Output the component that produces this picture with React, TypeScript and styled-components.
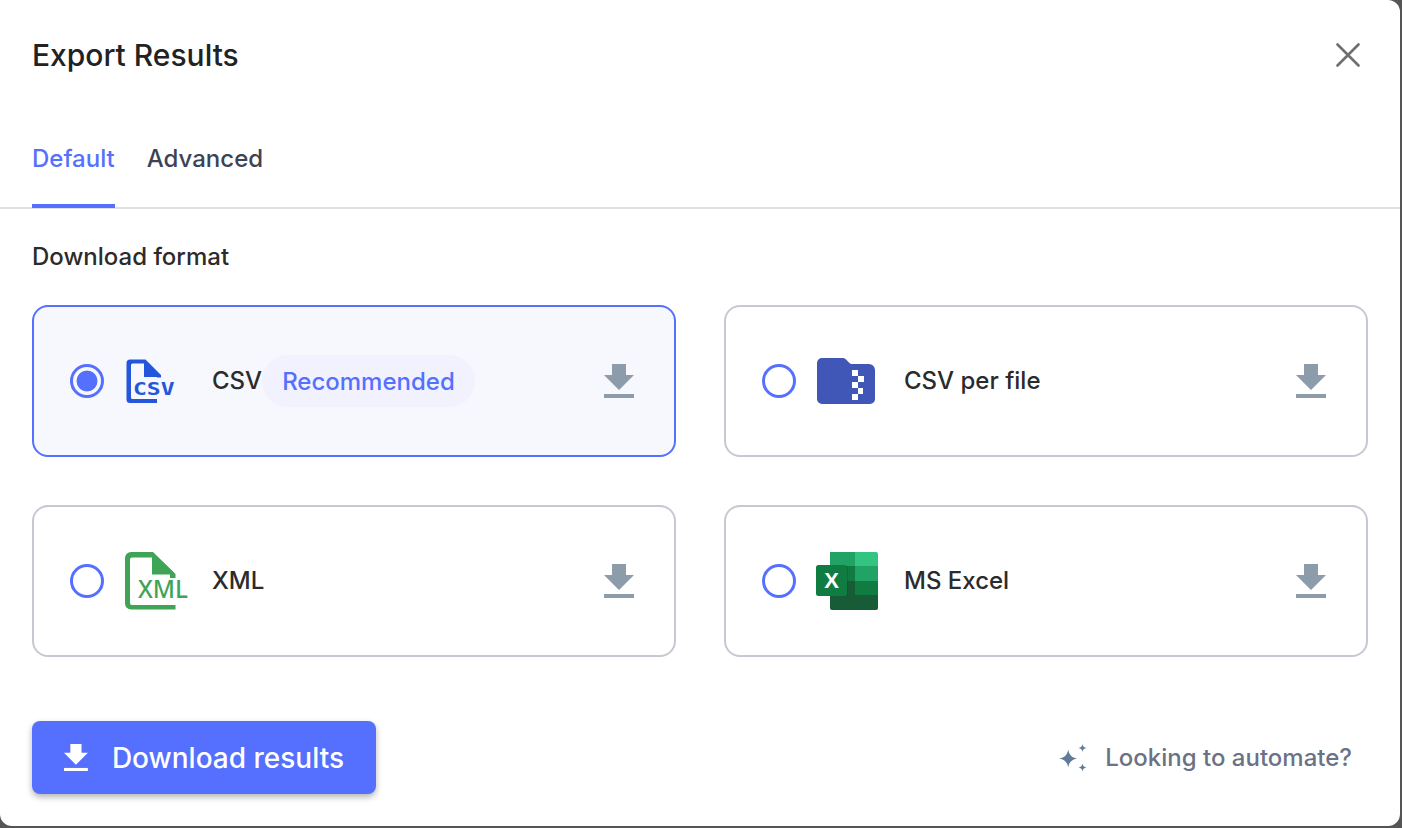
import styled, { createGlobalStyle } from 'styled-components'

const GlobalStyle = createGlobalStyle`
  html, body {
    margin: 0;
    padding: 0;
    background: #555555;
  }
  * {
    box-sizing: border-box;
  }
`

function DownloadIcon({ size = 30 }: { size?: number }) {
    return (
        <svg width={size} height={(size * 34) / 30} viewBox="0 0 30 34" fill="currentColor">
            <path d="M8 0h14v11h8L15 26 0 11h8z" />
            <rect x="0" y="30" width="30" height="4" />
        </svg>
    )
}

function CsvIcon() {
    return (
        <svg width="50" height="48" viewBox="0 0 50 48">
            <path
                d="M5 2.5h15.5L36 18v2.500h-4V20H19V6.500H7.500a1.500 1.500 0 0 0-1.500 1.500v32.500a1.500 1.500 0 0 0 1.500 1.500H32v4H5a3.500 3.500 0 0 1-3.500-3.500V6A3.500 3.500 0 0 1 5 2.500z"
                fill="#2456dc"
            />
            <path d="M22.500 5l12 12.500h-12z" fill="#2456dc" />
            <text x="8" y="38" fontFamily="'DejaVu Sans Mono', monospace" fontWeight="700" fontSize="18.500" fill="#2456dc" textLength="41.500" lengthAdjust="spacingAndGlyphs">CSV</text>
        </svg>
    )
}

function FolderIcon() {
    return (
        <svg width="58" height="48" viewBox="0 0 58 48">
            <path
                d="M5 1h20.500c1.500 0 2.600.5 3.500 1.500l3.500 3.500c.8.800 1.600 1 2.500 1H52a6 6 0 0 1 6 6v29a5 5 0 0 1-5 5H5a5 5 0 0 1-5-5V6a5 5 0 0 1 5-5z"
                fill="#4057b8"
            />
            <g fill="#ffffff">
                <rect x="35" y="13" width="6" height="6" />
                <rect x="41" y="19" width="6" height="6" />
                <rect x="35" y="25" width="6" height="6" />
                <rect x="41" y="31" width="5" height="6" />
                <rect x="35" y="37" width="6" height="6" />
            </g>
        </svg>
    )
}

function XmlIcon() {
    return (
        <svg width="66" height="60" viewBox="0 0 66 60">
            <path
                d="M7 1h22l22.500 22v4H46v-3.500H28V6.500H8a2 2 0 0 0-2 2V52a2 2 0 0 0 2 2h43.500v4.500H7a6 6 0 0 1-6-6V7a6 6 0 0 1 6-6z"
                fill="#3fa456"
            />
            <path d="M32 5l17 16H32z" fill="#3fa456" />
            <text x="14" y="47" fontFamily="'Noto Sans', sans-serif" fontWeight="500" fontSize="25" fill="#3fa456" textLength="50" lengthAdjust="spacingAndGlyphs">XML</text>
        </svg>
    )
}

function ExcelIcon() {
    return (
        <svg width="62" height="58" viewBox="0 0 62 58">
            <path d="M17 2a2 2 0 0 1 2-2h20v14H14z" fill="#21a366" />
            <path d="M14 0h25v14H14z" fill="#21a366" />
            <path d="M39 0h21a2 2 0 0 1 2 2v12H39z" fill="#33c481" />
            <rect x="14" y="14" width="25" height="15" fill="#107c41" />
            <rect x="39" y="14" width="23" height="15" fill="#21a366" />
            <rect x="14" y="29" width="25" height="14" fill="#185c37" />
            <rect x="39" y="29" width="23" height="14" fill="#107c41" />
            <path d="M14 43h48v13a2 2 0 0 1-2 2H16a2 2 0 0 1-2-2z" fill="#185c37" />
            <rect x="14" y="14" width="18" height="30" fill="#0b3a22" opacity="0.25" />
            <rect x="0" y="13" width="31" height="31" rx="2.500" fill="#107c41" />
            <text x="15.500" y="36" textAnchor="middle" fontFamily="'Liberation Sans', sans-serif" fontWeight="700" fontSize="22" fill="#ffffff">X</text>
        </svg>
    )
}

function SparkleIcon() {
    return (
        <svg width="30" height="30" viewBox="0 0 30 30" fill="#5f7d98">
            <path d="M12 6.500c1 4.800 3.200 7 8 8-4.800 1-7 3.200-8 8-1-4.800-3.200-7-8-8 4.800-1 7-3.200 8-8z" transform="translate(-4 -.5) scale(1.100)" />
            <path d="M23.500 1c.5 2.600 1.400 3.500 4 4-2.600.5-3.500 1.400-4 4-.5-2.600-1.400-3.500-4-4 2.600-.5 3.500-1.400 4-4z" />
            <path d="M23.500 20.500c.5 2.600 1.400 3.500 4 4-2.600.5-3.500 1.400-4 4-.5-2.600-1.400-3.500-4-4 2.600-.5 3.500-1.400 4-4z" />
        </svg>
    )
}

const formats = [
    { name: 'CSV', icon: <CsvIcon />, selected: true, recommended: true, iconWidth: 52 },
    { name: 'CSV per file', icon: <FolderIcon />, selected: false, recommended: false, iconWidth: 60 },
    { name: 'XML', icon: <XmlIcon />, selected: false, recommended: false, iconWidth: 66 },
    { name: 'MS Excel', icon: <ExcelIcon />, selected: false, recommended: false, iconWidth: 62 },
]

export default function App() {
    return (
        <Modal>
            <GlobalStyle />
            <Header>
                <Title>Export Results</Title>
                <CloseButton aria-label="Close">
                    <svg width="24" height="24" viewBox="0 0 24 24" stroke="currentColor" strokeWidth="2.600" strokeLinecap="round">
                        <path d="M1.500 1.500l21 21M22.500 1.500l-21 21" />
                    </svg>
                </CloseButton>
            </Header>
            <Tabs>
                <Tab $active>Default</Tab>
                <Tab>Advanced</Tab>
            </Tabs>
            <Body>
                <SectionLabel>Download format</SectionLabel>
                <FormatGrid>
                    {formats.map((format) => (
                        <FormatCard key={format.name} $selected={format.selected}>
                            <Radio $selected={format.selected} />
                            <IconSlot $width={format.iconWidth}>{format.icon}</IconSlot>
                            <FormatName>{format.name}</FormatName>
                            {format.recommended && <Badge>Recommended</Badge>}
                            <CardDownload>
                                <DownloadIcon />
                            </CardDownload>
                        </FormatCard>
                    ))}
                </FormatGrid>
                <Footer>
                    <DownloadButton>
                        <DownloadIcon size={24} />
                        Download results
                    </DownloadButton>
                    <AutomateLink>
                        <SparkleIcon />
                        Looking to automate?
                    </AutomateLink>
                </Footer>
            </Body>
        </Modal>
    )
}

const Modal = styled.div`
  width: 1400px;
  height: 826px;
  background: #ffffff;
  border-radius: 0 0 12px 12px;
  border-top-right-radius: 12px;
  font-family: Inter, 'Liberation Sans', sans-serif;
  color: #2b2b2b;
  overflow: hidden;
`

const Header = styled.header`
  display: flex;
  justify-content: space-between;
  align-items: center;
  height: 110px;
  padding: 0 40px 0 32px;
`

const Title = styled.h2`
  margin: 0;
  font-size: 30px;
  line-height: 40px;
  font-weight: 500;
  color: #222222;
`

const CloseButton = styled.button`
  display: flex;
  padding: 0;
  border: 0;
  background: none;
  color: #6f6f6f;
`

const Tabs = styled.nav`
  display: flex;
  gap: 32px;
  height: 99px;
  padding: 0 32px;
  border-bottom: 2px solid #dfdfdf;
`

const Tab = styled.div<{ $active?: boolean }>`
  height: 98px;
  padding-top: 31px;
  font-size: 24px;
  line-height: 36px;
  font-weight: 500;
  color: ${(p) => (p.$active ? '#5570ff' : '#3d4356')};
  border-bottom: 4px solid ${(p) => (p.$active ? '#5570ff' : 'transparent')};
`

const Body = styled.div`
  padding: 0 32px;
`

const SectionLabel = styled.div`
  margin-top: 30px;
  font-size: 24px;
  line-height: 36px;
  font-weight: 500;
  color: #2b2b2b;
`

const FormatGrid = styled.div`
  display: grid;
  grid-template-columns: 644px 644px;
  grid-auto-rows: 152px;
  gap: 48px;
  margin-top: 30px;
`

const FormatCard = styled.div<{ $selected: boolean }>`
  display: flex;
  align-items: center;
  padding: 0 36px;
  border: 2px solid ${(p) => (p.$selected ? '#5570ff' : '#c6c9d2')};
  border-radius: 16px;
  background: ${(p) => (p.$selected ? '#f7f8fe' : '#ffffff')};
`

const Radio = styled.span<{ $selected: boolean }>`
  flex: none;
  width: 34px;
  height: 34px;
  border: 3px solid #5570ff;
  border-radius: 50%;
  background: ${(p) => (p.$selected ? 'radial-gradient(circle, #5570ff 0 10px, transparent 10.8px)' : 'transparent')};
`

const IconSlot = styled.span<{ $width: number }>`
  display: flex;
  justify-content: center;
  flex: none;
  width: ${(p) => p.$width}px;
  margin-left: 20px;
  margin-right: ${(p) => 72 - p.$width + 16}px;
`

const FormatName = styled.span`
  font-size: 24px;
  line-height: 36px;
  font-weight: 500;
  color: #2b2b2b;
`

const Badge = styled.span`
  display: flex;
  align-items: center;
  height: 52px;
  padding: 0 20px;
  border-radius: 26px;
  background: #f1f2fd;
  color: #5570ff;
  font-size: 24px;
  font-weight: 500;
`

const CardDownload = styled.span`
  display: flex;
  margin-left: auto;
  margin-right: 4px;
  color: #8d9cab;
`

const Footer = styled.div`
  display: flex;
  justify-content: space-between;
  align-items: center;
  margin-top: 64px;
`

const DownloadButton = styled.button`
  display: flex;
  align-items: center;
  gap: 24px;
  width: 344px;
  height: 73px;
  padding: 0 32px;
  border: 0;
  border-radius: 8px;
  background: #5570ff;
  color: #ffffff;
  font-family: inherit;
  font-size: 28px;
  font-weight: 500;
  white-space: nowrap;
  box-shadow: 0 3px 6px rgba(0, 0, 0, 0.3);
`

const AutomateLink = styled.div`
  display: flex;
  align-items: center;
  gap: 16px;
  margin-right: 16px;
  font-size: 24px;
  font-weight: 500;
  color: #6b7285;
`
